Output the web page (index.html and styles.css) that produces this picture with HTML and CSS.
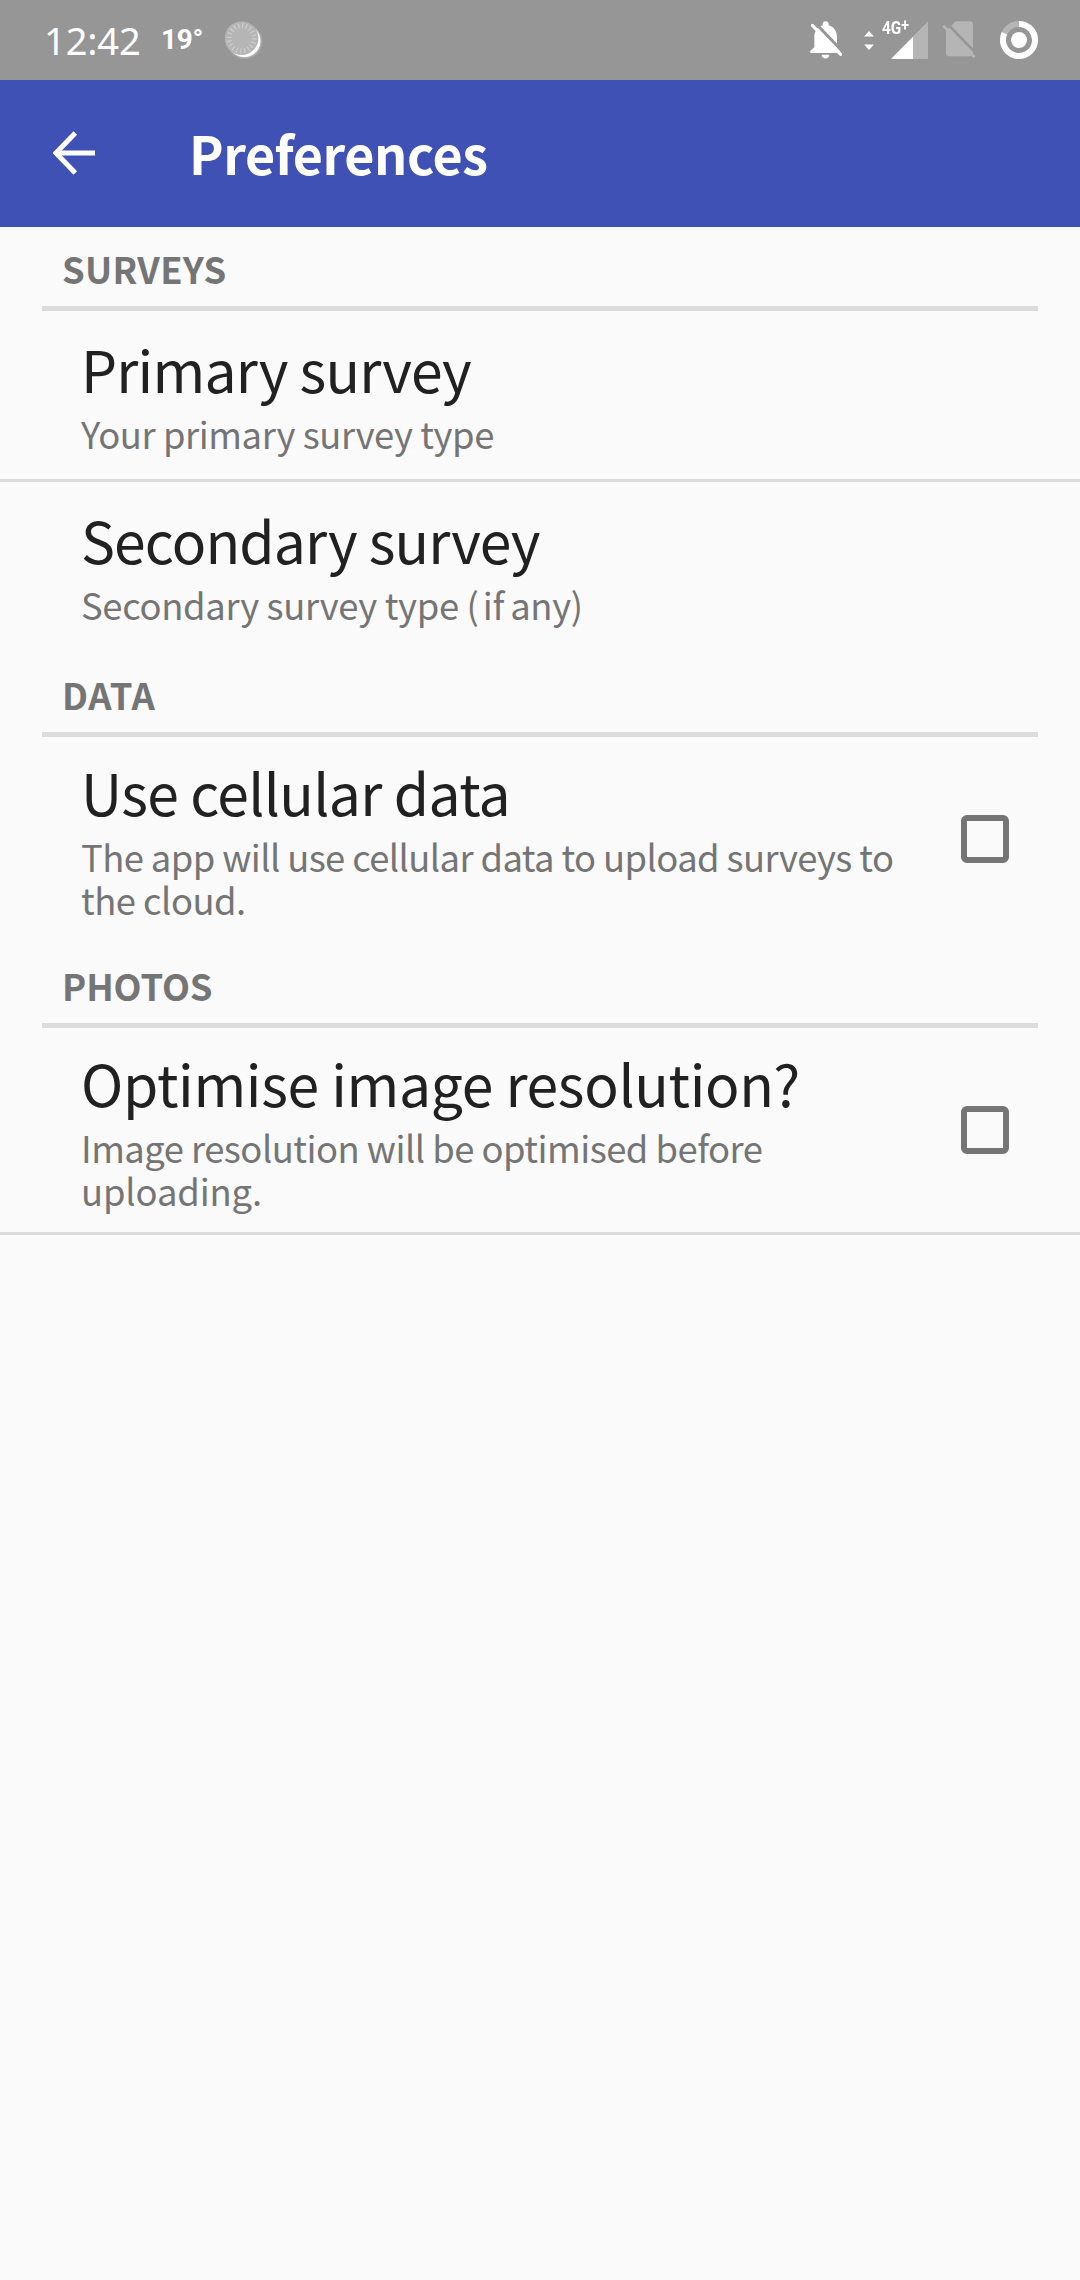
FILE: index.html
```html
<!DOCTYPE html>
<html lang="en">
<head>
<meta charset="utf-8">
<title>Preferences</title>
<link rel="stylesheet" href="styles.css">
</head>
<body>
<div class="status">
  <span class="clock">12:42</span>
  <span class="temp">19°</span>
  <svg class="weather" viewBox="0 0 40 40">
    <defs><filter id="soft" x="-20%" y="-20%" width="140%" height="140%"><feGaussianBlur stdDeviation="0.8"/></filter></defs>
    <circle cx="21.6" cy="21.4" r="16.3" fill="#fff" opacity=".55" filter="url(#soft)"/>
    <circle cx="21.2" cy="20.8" r="16.2" fill="#fff"/>
    <circle cx="18.6" cy="18.2" r="16.8" fill="#b5b5b5"/>
    <circle cx="18.6" cy="18.2" r="12.6" fill="none" stroke="#cbcbcb" stroke-width="5" stroke-dasharray="1.3 2.658"/>
  </svg>
  <div class="indicators">
    <svg class="bell" viewBox="90 63 96 114">
      <path d="M103 112c0-19 10-32 25-36v-3a9 9 0 0 1 18 0v3c15 4 25 17 25 36v31l9 9v7H91v-7l12-10zM125 164h23c0 15-23 15-23 0z" fill="#fff"/>
      <path d="M102 65l94 98" stroke="#969696" stroke-width="9"/>
      <path d="M97 76l85 87" stroke="#fff" stroke-width="9" stroke-linecap="round"/>
    </svg>
    <svg class="arrows" viewBox="252 90 30 58"><path d="M252 107l15-17 15 17zM252 131h30l-15 17z" fill="#fff"/></svg>
    <div class="cell">
      <svg viewBox="306 63 139 114"><path d="M333 177L445 63v114z" fill="#b5b5b5"/><path d="M333 177l66-67v67z" fill="#fff"/></svg>
      <span class="net">4G<sup>+</sup></span>
    </div>
    <svg class="sim" viewBox="486 65 103 113">
      <path d="M527 66h43q9 0 9 9v87q0 9-9 9h-63q-9 0-9-9V95z" fill="#b5b5b5"/>
      <path d="M495 66l100 103" stroke="#969696" stroke-width="8"/>
      <path d="M490 79l94 95" stroke="#b5b5b5" stroke-width="8.500"/>
    </svg>
    <svg class="battery" viewBox="660 63 114 114">
      <circle cx="717" cy="120" r="48" fill="none" stroke="#b5b5b5" stroke-width="18"/>
      <path d="M717 72A48 48 0 1 1 673.500 99.700" fill="none" stroke="#fff" stroke-width="18"/>
      <circle cx="717" cy="120" r="24" fill="#fff"/>
    </svg>
  </div>
</div>
<header class="appbar">
  <svg class="back" viewBox="0 0 42 44"><path d="M42 22H4M22.300 2L3 22l19.300 20" fill="none" stroke="#fff" stroke-width="5"/></svg>
  <h1>Preferences</h1>
</header>
<main>
  <h2 class="surveys">SURVEYS</h2>
  <div class="row first">
    <div class="text"><div class="title t-primary">Primary survey</div><div class="sub s-primary">Your primary survey type</div></div>
  </div>
  <div class="row second">
    <div class="text"><div class="title t-secondary">Secondary survey</div><div class="sub s-secondary">Secondary survey type <span class="paren">(</span>if<span class="tight"> </span>any)</div></div>
  </div>
  <h2 class="data">DATA</h2>
  <div class="row check">
    <div class="text"><div class="title t-data">Use cellular data</div><div class="sub"><span class="s-app">The app will use cellular data to upload surveys to</span><br>the cloud.</div></div>
    <span class="box"></span>
  </div>
  <h2 class="photos">PHOTOS</h2>
  <div class="row check last">
    <div class="text"><div class="title t-photos">Optimise image resolution?</div><div class="sub">Image resolution will be optimised before<br><span class="s-up">uploading.</span></div></div>
    <span class="box"></span>
  </div>
</main>
</body>
</html>
```
FILE: styles.css
```css
* { box-sizing: border-box; }
body {
  margin: 0;
  min-height: 2280px;
  background: #fafafa;
  font-family: "Noto Sans CJK SC", "Noto Sans", sans-serif;
}
svg { display: block; flex: none; }

.status {
  height: 80px;
  padding: 0 41px 0 44px;
  background: #969696;
  color: #fff;
  display: flex;
  align-items: center;
  white-space: nowrap;
}
.clock { font: 38px/52px "Noto Sans", sans-serif; width: 117px; letter-spacing: -0.1px; margin-top: -1px; }
.temp { font: bold 28px/34px Roboto, sans-serif; width: 62px; letter-spacing: -0.3px; margin-top: -1px; }
.weather { width: 40px; height: 40px; margin-top: 0; }
.indicators { margin-left: auto; display: flex; align-items: center; }
.bell { width: 32px; height: 38px; margin-right: 22px; }
.arrows { width: 10px; height: 19px; margin-right: 8px; }
.cell { position: relative; width: 46.3px; height: 38px; margin-right: 13.700px; }
.cell svg { width: 46.3px; height: 38px; }
.net {
  position: absolute;
  left: 0;
  top: -3px;
  font: bold 18.5px/20px Roboto, sans-serif;
  transform: scaleX(0.83);
  transform-origin: 0 0;
}
.net sup { font-size: 17px; line-height: 0; vertical-align: 3px; }
.sim { width: 34.3px; height: 37.700px; margin-right: 23.700px; }
.battery { width: 38px; height: 38px; margin-right: 1px; }

.appbar {
  height: 147px;
  padding-left: 53px;
  background: #3f51b5;
  color: #fff;
  display: flex;
  align-items: center;
}
.back { width: 42px; height: 44px; margin: 0 94px 2px 0; }
h1 { margin: 0; font-size: 52px; line-height: 76px; font-weight: 700; letter-spacing: -0.4px; padding-bottom: 1px; }

h2 {
  height: 84px;
  margin: 0 42px;
  padding: 15px 0 0 20px;
  border-bottom: 5px solid #dcdcdc;
  color: #757575;
  font-size: 36.4px;
  line-height: 52px;
  font-weight: 700;
}
.surveys { letter-spacing: 0.3px; }
.data { letter-spacing: 0.8px; }
.photos { letter-spacing: -0.1px; }

.row { display: flex; padding: 16px 71px 0 81px; }
.first { height: 171px; border-bottom: 3px solid #dcdcdc; }
.second { height: 171px; }
.check { height: 207px; padding-top: 13px; justify-content: space-between; }
.last { border-bottom: 3px solid #dcdcdc; }
.text { white-space: nowrap; }
.title { color: #212121; font-size: 57px; line-height: 82px; }
.t-primary { letter-spacing: -0.8px; }
.t-secondary { letter-spacing: -0.85px; }
.t-data { letter-spacing: -0.65px; }
.t-photos { letter-spacing: -0.33px; }
.sub { margin-top: 3px; color: #757575; font-size: 36.4px; line-height: 43px; letter-spacing: -0.52px; }
.s-primary { letter-spacing: -0.43px; }
.s-secondary { letter-spacing: -0.35px; }
.s-app { letter-spacing: -0.6px; }
.s-up { letter-spacing: -0.14px; }
.paren { letter-spacing: 4px; }
.tight { letter-spacing: -2px; }
.box { width: 48px; height: 48px; margin-top: 65px; border: 6px solid #757575; border-radius: 6px; }
```
